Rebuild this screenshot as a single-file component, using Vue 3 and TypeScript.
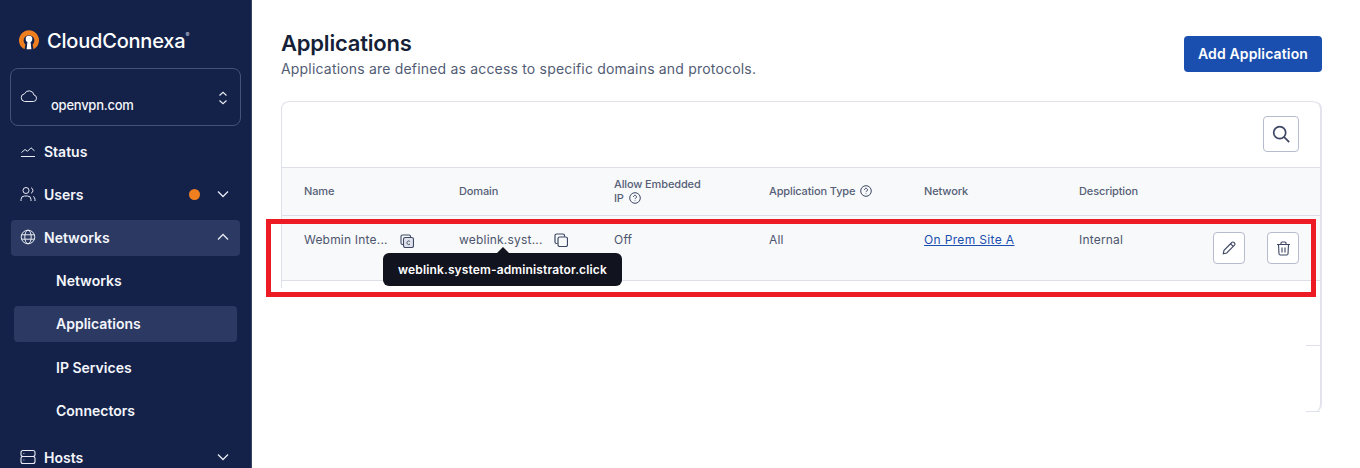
<script setup lang="ts">
interface Column { label: string; help?: boolean }
const columns: Column[] = [
  { label: 'Name' },
  { label: 'Domain' },
  { label: 'Allow Embedded IP', help: true },
  { label: 'Application Type', help: true },
  { label: 'Network' },
  { label: 'Description' },
]
const subItems = ['Networks', 'Applications', 'IP Services', 'Connectors']
</script>

<template>
  <div class="page">
    <aside class="sidebar">
      <div class="logo">
        <svg width="22" height="22" viewBox="0 0 22 22" class="logo-mark">
          <path d="M6.500 20.200A10 10 0 1 1 15.500 20.200L14.600 15.600A5.400 5.400 0 1 0 7.400 15.600Z" fill="#f07f1f" />
          <circle cx="11" cy="10" r="3.300" fill="#fff" />
          <path d="M9.600 11.500h2.800l1 8.800h-4.800Z" fill="#fff" />
        </svg>
        <span class="logo-text">CloudConnexa</span><sup class="logo-reg">®</sup>
      </div>

      <div class="selector">
        <svg class="sel-cloud" width="18" height="14" viewBox="0 0 18 14" fill="none" stroke="#e8ebf3" stroke-width="1">
          <path d="M4.500 12.500h9a3.300 3.300 0 0 0 .5-6.500 5 5 0 0 0-9.500-1.200 3.900 3.900 0 0 0 0 7.700Z" />
        </svg>
        <span class="sel-name">openvpn.com</span>
        <svg class="sel-arrows" width="10" height="14" viewBox="0 0 10 14" fill="none" stroke="#e8ebf3" stroke-width="1.200">
          <path d="M1.500 4.500 5 1.200l3.500 3.300M1.500 9.500 5 12.800l3.500-3.300" />
        </svg>
      </div>

      <nav class="nav">
        <div class="nav-item">
          <svg class="nav-icon" width="16" height="16" viewBox="0 0 16 16" fill="none" stroke="#e8ebf3" stroke-width="1">
            <path d="M1.500 9.500 5 6.500l2.500 1.800L11 4.800l3.500 3M1 13.500h14" />
          </svg>
          <span>Status</span>
        </div>
        <div class="nav-item">
          <svg class="nav-icon" width="16" height="16" viewBox="0 0 16 16" fill="none" stroke="#e8ebf3" stroke-width="1">
            <circle cx="6" cy="4.500" r="3" />
            <path d="M1 15v-1.500A3.500 3.500 0 0 1 4.500 10h3a3.500 3.500 0 0 1 3.500 3.500V15M11 1.700a3 3 0 0 1 0 5.600M13 10.400a3.300 3.300 0 0 1 2 3V15" />
          </svg>
          <span>Users</span>
          <i class="dot"></i>
          <svg class="chev" width="12" height="8" viewBox="0 0 12 8" fill="none" stroke="#e8ebf3" stroke-width="1.300"><path d="m1 1.500 5 5 5-5" /></svg>
        </div>
        <div class="nav-item active">
          <svg class="nav-icon" width="16" height="16" viewBox="0 0 16 16" fill="none" stroke="#e8ebf3" stroke-width="1">
            <circle cx="8" cy="8" r="6.800" />
            <ellipse cx="8" cy="8" rx="3.200" ry="6.800" />
            <path d="M1.500 5.800h13M1.500 10.200h13" />
          </svg>
          <span>Networks</span>
          <svg class="chev" width="12" height="8" viewBox="0 0 12 8" fill="none" stroke="#e8ebf3" stroke-width="1.300"><path d="m1 6.500 5-5 5 5" /></svg>
        </div>
        <div v-for="item in subItems" :key="item" class="sub-item" :class="{ current: item === 'Applications' }">{{ item }}</div>
        <div class="nav-item hosts">
          <svg class="nav-icon" width="16" height="16" viewBox="0 0 16 16" fill="none" stroke="#e8ebf3" stroke-width="1.100">
            <rect x="1" y="1.500" width="14" height="6" rx="2" />
            <rect x="1" y="7.500" width="14" height="7" rx="2" />
            <path d="M3.500 4.500h.8M3.500 11h.8" />
          </svg>
          <span>Hosts</span>
          <svg class="chev" width="12" height="8" viewBox="0 0 12 8" fill="none" stroke="#e8ebf3" stroke-width="1.300"><path d="m1 1.500 5 5 5-5" /></svg>
        </div>
      </nav>
    </aside>

    <main class="main">
      <header class="head">
        <div>
          <h1>Applications</h1>
          <p>Applications are defined as access to specific domains and protocols.</p>
        </div>
        <button class="add">Add Application</button>
      </header>

      <section class="card">
        <div class="upper">
          <div class="toolbar">
            <button class="icon-btn search" aria-label="Search">
              <svg width="20" height="20" viewBox="0 0 20 20" fill="none" stroke="#3d4763" stroke-width="1.700">
                <circle cx="8.700" cy="8.700" r="6" />
                <path d="m13.200 13.200 5 5" />
              </svg>
            </button>
          </div>
          <div class="grid thead">
            <div v-for="c in columns" :key="c.label" class="th">
              {{ c.label }}
              <svg v-if="c.help" class="help" width="12" height="12" viewBox="0 0 12 12" fill="none" stroke="#3d4763">
                <circle cx="6" cy="6" r="5.300" />
                <path d="M4.500 4.800a1.500 1.500 0 1 1 2.300 1.300c-.5.300-.8.500-.8 1" />
                <path d="M6 8.500v.6" />
              </svg>
            </div>
          </div>
          <div class="grid tbody">
            <div class="td with-copy">
              <span class="cell-text">Webmin Inte...</span>
              <svg class="copy-alt" width="14" height="14" viewBox="0 0 14 14" fill="none" stroke="#3d4763" stroke-width="1.100">
                <path d="M3 10.500H2.500A1.500 1.500 0 0 1 1 9V2.500A1.500 1.500 0 0 1 2.500 1H9a1.500 1.500 0 0 1 1.500 1.500V3" />
                <rect x="3.500" y="3.500" width="10" height="10" rx="1.800" fill="#dfe2ea" />
                <path d="M10 7.500a1.800 1.800 0 1 0 0 2.500" stroke-width=".9" />
              </svg>
            </div>
            <div class="td with-copy">
              <span class="cell-text">weblink.syst...</span>
              <svg class="copy" width="14" height="14" viewBox="0 0 14 14" fill="none" stroke="#3d4763" stroke-width="1.200">
                <path d="M3.500 10.500H2.500A1.500 1.500 0 0 1 1 9V2.500A1.500 1.500 0 0 1 2.500 1H9a1.500 1.500 0 0 1 1.500 1.500v1" />
                <rect x="4" y="4" width="9.500" height="9.500" rx="1.800" />
              </svg>
              <div class="tooltip">weblink.system-administrator.click</div>
            </div>
            <div class="td">Off</div>
            <div class="td">All</div>
            <div class="td"><a class="link" href="#">On Prem Site A</a></div>
            <div class="td">Internal</div>
            <div class="actions">
              <button class="icon-btn" aria-label="Edit">
                <svg width="14" height="14" viewBox="0 0 14 14" fill="none" stroke="#3d4763" stroke-width="1.100">
                  <path d="M1.300 12.700 2 9.300 9.800 1.500a1.500 1.500 0 0 1 2.200 0l.5.500a1.500 1.500 0 0 1 0 2.200L4.700 12Z" />
                  <path d="m8.600 2.800 2.600 2.600" />
                </svg>
              </button>
              <button class="icon-btn" aria-label="Delete">
                <svg width="15" height="15" viewBox="0 0 15 15" fill="none" stroke="#3d4763" stroke-width="1.100">
                  <path d="M1 3.500h13M5 3.500V2a1 1 0 0 1 1-1h3a1 1 0 0 1 1 1v1.500M2.500 3.500l.5 9.500a1.200 1.200 0 0 0 1.200 1h6.600a1.200 1.200 0 0 0 1.200-1l.5-9.500M6 6.500v5M9 6.500v5" />
                </svg>
              </button>
            </div>
          </div>
          <div class="tail"></div>
        </div>
        <div class="rest">
          <div class="stub first"></div>
          <div class="stub"></div>
        </div>
      </section>
    </main>

    <div class="annotation"></div>
  </div>
</template>

<style>
html, body { margin: 0; background: #fff; overflow: hidden; }
</style>

<style scoped>
.page {
  display: flex;
  height: 468px;
  width: 1360px;
  overflow: hidden;
  position: relative;
  font-family: Inter, "Noto Sans", sans-serif;
}
.sidebar {
  flex: none;
  background: #14224a;
  border-right: 1px solid #3a4566;
  color: #f4f6fb;
  padding: 28px 10px 0 10px;
  box-sizing: content-box;
  width: 231px;
}
.logo { display: flex; align-items: flex-start; height: 40px; margin-left: 8px; }
.logo-mark { flex: none; margin-top: 1px; }
.logo-text {
  font-size: 20px;
  font-weight: 500;
  letter-spacing: -0.2px;
  line-height: 24px;
  color: #fff;
  margin-left: 7px;
  padding-top: 1px;
}
.logo-reg { font-size: 6px; line-height: 10px; color: #cfd4e0; margin-top: 2px; }
.selector {
  height: 58px;
  box-sizing: border-box;
  border: 1px solid #46517a;
  border-radius: 8px;
  display: flex;
  align-items: flex-start;
  padding: 19px 9px 0 9px;
}
.sel-cloud { flex: none; margin-top: 1px; }
.sel-name { font-size: 13px; margin: 9px 0 0 13px; line-height: 16px; font-weight: 500; letter-spacing: -0.25px; flex: 1; }
.sel-arrows { flex: none; margin-top: 3px; margin-right: 3px; }
.nav { margin-top: 8px; }
.nav-item {
  height: 36px;
  box-sizing: border-box;
  margin: 0 1px 7px;
  border-radius: 4px;
  display: flex;
  align-items: center;
  padding: 0 11px 2px 9px;
  font-size: 14px;
  font-weight: 600;
}
.nav-item span { margin-left: 8px; flex: 1; }
.nav-item.active { background: #2c3a63; }
.nav-item.hosts { margin-top: 11px; }
.nav-icon { flex: none; }
.dot { width: 11px; height: 11px; border-radius: 50%; background: #f07f1f; margin-right: 17px; }
.chev { flex: none; }
.sub-item {
  height: 36px;
  box-sizing: border-box;
  margin: 0 4px 7px;
  padding: 0 0 2px 42px;
  display: flex;
  align-items: center;
  border-radius: 4px;
  font-size: 14px;
  font-weight: 600;
}
.sub-item.current { background: #2c3a63; margin-bottom: 8px; }
.main { flex: 1; min-width: 0; padding: 31px 38px 0 29px; }
.head { display: flex; justify-content: space-between; align-items: flex-start; height: 70px; }
h1 { margin: 0; font-size: 22px; line-height: 24px; font-weight: 600; color: #161f38; letter-spacing: -0.2px; }
.head p { margin: 2px 0 0; font-size: 14px; line-height: 24px; color: #525c74; letter-spacing: 0.186px; }
.add {
  margin: 5px 0 0;
  width: 138px;
  height: 36px;
  padding: 0 0 2px;
  border: 0;
  border-radius: 4px;
  background: #1a4fb0;
  color: #fff;
  font: 600 14px Inter, sans-serif;
  letter-spacing: 0.14px;
}
.card {
  height: 311px;
  border-right: 2px solid #e2e3ec;
  border-radius: 0 8px 8px 0;
  display: flex;
  flex-direction: column;
  box-sizing: border-box;
}
.upper {
  border-top: 1px solid #dfe1ea;
  border-left: 1px solid #dfe1ea;
  border-radius: 8px 8px 0 0;
  height: 186px;
  flex: none;
}
.toolbar { height: 65px; display: flex; justify-content: flex-end; align-items: flex-start; padding: 14px 21px 0 0; box-sizing: border-box; }
.icon-btn {
  width: 32px;
  height: 32px;
  padding: 0;
  background: #fff;
  border: 1px solid #b6bccd;
  border-radius: 4px;
  display: flex;
  align-items: center;
  justify-content: center;
}
.icon-btn.search { width: 36px; height: 36px; }
.grid {
  display: grid;
  grid-template-columns: repeat(6, 155px) 1fr;
  padding-left: 22px;
  background: #f8f9fb;
  border-top: 1px solid #dcdee8;
}
.thead { height: 48px; box-sizing: border-box; align-items: center; padding-bottom: 2px; }
.th { font-size: 11px; line-height: 14px; font-weight: 500; color: #565f77; padding-right: 60px; letter-spacing: -0.13px; }
.th:nth-child(4) { padding-right: 0; }
.help { vertical-align: -2px; margin-left: 2px; }
.tbody {
  height: 66px;
  box-sizing: border-box;
  border-bottom: 1px solid #dcdee8;
  position: relative;
}
.td { font-size: 12px; line-height: 16px; color: #4c556d; padding-top: 16px; letter-spacing: 0.2px; }
.with-copy { position: relative; }
.cell-text { display: inline-block; }
.copy-alt { position: absolute; left: 96px; top: 18px; }
.copy { position: absolute; left: 95px; top: 17px; }
.link { color: #1a4fb0; letter-spacing: 0.35px; }
.actions { display: flex; justify-content: flex-end; gap: 22px; padding: 16px 21px 0 0; margin-left: -21px; }
.tooltip {
  position: absolute;
  left: -76px;
  top: 37px;
  height: 33px;
  padding: 0 15px;
  display: flex;
  align-items: center;
  white-space: nowrap;
  background: #11131f;
  color: #fff;
  font-size: 12px;
  font-weight: 600;
  border-radius: 6px;
  letter-spacing: 0.14px;
  z-index: 2;
}
.tooltip::before {
  content: "";
  position: absolute;
  left: 114px;
  top: -6px;
  border-left: 6px solid transparent;
  border-right: 6px solid transparent;
  border-bottom: 6px solid #11131f;
}
.tail { height: 7px; }
.rest { flex: 1; display: flex; flex-direction: column; align-items: flex-end; }
.stub { width: 14px; height: 1px; background: #dfe1ea; margin-top: auto; }
.stub.first { margin-top: 57px; margin-bottom: 0; }
.annotation {
  position: absolute;
  left: 266px;
  top: 219px;
  width: 1050px;
  height: 78px;
  box-sizing: border-box;
  border: 5px solid #ed1c24;
  pointer-events: none;
}
</style>
